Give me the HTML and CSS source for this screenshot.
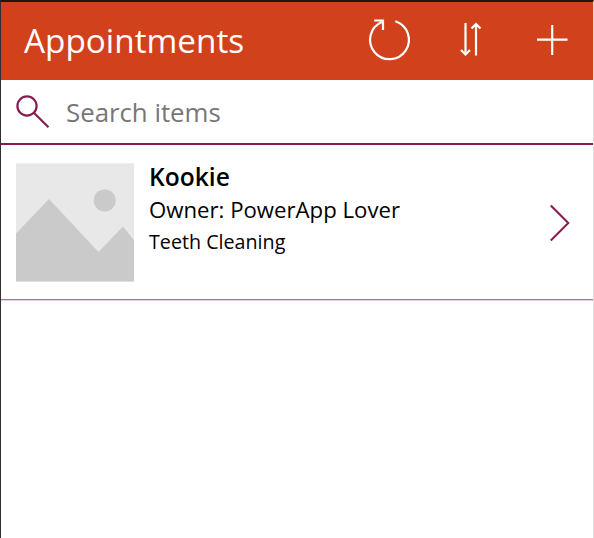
FILE: index.html
```html
<!DOCTYPE html>
<html lang="en">
<head>
<meta charset="utf-8">
<title>Appointments</title>
<link rel="stylesheet" href="styles.css">
</head>
<body>
<main class="app">
  <header class="header">
    <h1 class="title">Appointments</h1>
    <nav class="actions">
      <svg class="action" width="48" height="48" viewBox="0 0 48 48" aria-label="Refresh"><path d="M29.3 5.3A19.4 19.4 0 1 1 15.8 6M8.2 4.5H17V14"/></svg>
      <svg class="action" width="24" height="40" viewBox="0 0 24 40" aria-label="Sort"><path d="M7.5 3V34M3 30L7.5 34.5L12 30M18 35.5V4.5M13.5 8.5L18 4L22.5 8.5"/></svg>
      <svg class="action" width="32" height="32" viewBox="0 0 32 32" aria-label="Add"><path d="M1 15.7H31.5M16.2 1V31"/></svg>
    </nav>
  </header>
  <div class="search">
    <svg class="search-icon" width="34" height="34" viewBox="0 0 34 34"><circle cx="11" cy="11" r="9.6"/><path d="M17.8 17.8L32.5 32.3"/></svg>
    <span class="hint">Search items</span>
  </div>
  <article class="item">
    <svg class="thumb" width="118" height="119" viewBox="0 0 118 119"><path fill="#e8e8e8" d="M0 .3H118V118.5H0Z"/><circle cx="88.7" cy="37.4" r="11" fill="#cacaca"/><path fill="#cacaca" d="M0 70.5L33 36L82.5 89L107 63.5L118 77.5V118.5H0Z"/></svg>
    <div class="details">
      <div class="name">Kookie</div>
      <div class="owner">Owner: PowerApp Lover</div>
      <div class="service">Teeth Cleaning</div>
    </div>
    <svg class="chevron" width="22" height="38" viewBox="0 0 22 38"><path d="M1.8 1.5L19.3 19L1.8 36.5"/></svg>
  </article>
</main>
</body>
</html>
```
FILE: styles.css
```css
* { box-sizing: border-box; }
body {
  margin: 0;
  background: #fff;
  font-family: "Open Sans", sans-serif;
  overflow: hidden;
}
.app {
  height: 538px;
  border-top: 2px solid #1d1516;
  border-left: 1px solid #303033;
  border-right: 1px solid #dedede;
}
.header {
  height: 78px;
  display: flex;
  align-items: center;
  justify-content: space-between;
  padding: 0 25px 0 23px;
  background: #d1411c;
  color: #fff;
}
.title {
  margin: 0;
  padding-bottom: 2px;
  font-size: 33.3px;
  line-height: 46px;
  font-weight: 400;
  width: 221px;
  white-space: nowrap;
}
.actions { display: flex; align-items: center; padding-bottom: 2px; }
.action { fill: none; stroke: #fff; stroke-width: 2.2; }
.action:nth-child(2) { margin: 0 54px 0 44px; }
.search {
  height: 65px;
  display: flex;
  align-items: center;
  gap: 16px;
  padding-left: 15px;
  border-bottom: 2px solid #861c51;
}
.search-icon { fill: none; stroke: #861c51; stroke-width: 2.2; }
.hint { color: #777; font-size: 25.8px; line-height: 36px; }
.item {
  height: 155px;
  display: flex;
  padding: 18px 22px 0 15px;
  border-bottom: 1px solid #b96e91;
  box-shadow: 0 1px #ead2dc;
}
.thumb { flex: none; }
.details { margin-left: 15px; color: #000; white-space: nowrap; }
.name { margin-bottom: 2px; font-size: 24.6px; line-height: 27px; font-weight: 600; }
.owner { font-size: 22.2px; line-height: 35px; }
.service { font-size: 19.7px; line-height: 30px; }
.chevron {
  margin: 41px 0 0 auto;
  fill: none;
  stroke: #861c51;
  stroke-width: 2;
}
```
